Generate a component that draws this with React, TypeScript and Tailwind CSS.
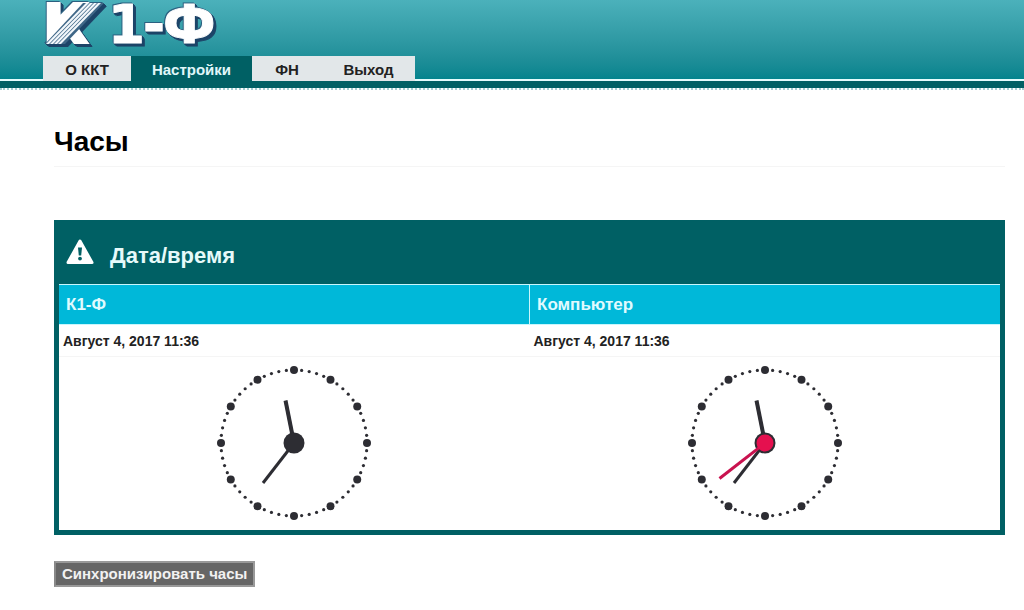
import clsx from 'clsx'
import React from 'react'

interface Tab {
  label: string
  width: string
  active?: boolean
}

interface ClockProps {
  label: string
  withSeconds?: boolean
}

const tabs: Tab[] = [
  { label: 'О ККТ', width: 'w-[88px]' },
  { label: 'Настройки', width: 'w-[121px]', active: true },
  { label: 'ФН', width: 'w-[70px]' },
  { label: 'Выход', width: 'w-[93px]' }
]

const clocks = [
  { name: 'К1-Ф', time: 'Август 4, 2017 11:36', withSeconds: false },
  { name: 'Компьютер', time: 'Август 4, 2017 11:36', withSeconds: true }
]

const ticks = Array.from({ length: 60 }, (_, i) => {
  const angle = (i * Math.PI) / 30
  return {
    x: 73 * Math.sin(angle),
    y: -73 * Math.cos(angle),
    r: i % 5 === 0 ? 4 : 1.6
  }
})

const stripes = [3, 7, 11, 15]

const Logo: React.FC = () => (
  <svg
    viewBox="0 0 180 56"
    className="block w-[180px] h-14 overflow-visible [filter:drop-shadow(-1px_-1px_0_#2b6080)_drop-shadow(1px_1px_0_#1d4468)_drop-shadow(1px_1px_0_#1d4468)_drop-shadow(1px_1px_0_#1d4468)]"
    fontFamily="DejaVu Sans"
    fontWeight="bold"
    role="img"
    aria-label="К1-Ф"
  >
    <g fill="#fff" stroke="#fff">
      <text x="1" y="42" fontSize="52" strokeWidth="4">
        К
      </text>
      <text x="65 100 120" y="43" fontSize="53" strokeWidth="1">
        1-Ф
      </text>
    </g>
    <polygon points="2,44 22,44 61,3 40,3" fill="#3f6787" />
    {stripes.map((x) => (
      <polygon
        key={x}
        points={`${x},44 ${x + 3},44 ${x + 43},3 ${x + 40},3`}
        fill="#f2f7fb"
      />
    ))}
  </svg>
)

const WarningIcon: React.FC = () => (
  <svg viewBox="0 0 28 26" className="block w-7 h-[26px]" aria-hidden="true">
    <path
      d="M14 2 L26 23.5 H2 Z"
      fill="#fff"
      stroke="#fff"
      strokeWidth="3"
      strokeLinejoin="round"
    />
    <path d="M12 8.5 h4 l-0.8 8 h-2.4 Z" fill="#006064" />
    <circle cx="14" cy="19.6" r="1.9" fill="#006064" />
  </svg>
)

const Clock: React.FC<ClockProps> = ({ label, withSeconds }) => (
  <svg
    viewBox="-78 -78 156 156"
    className="block mx-auto w-[156px] h-[156px]"
    role="img"
    aria-label={label}
  >
    {ticks.map((t, i) => (
      <circle key={i} cx={t.x} cy={t.y} r={t.r} fill="#2d2d33" />
    ))}
    <line x2="-8.5" y2="-42.5" stroke="#2d2d33" strokeWidth="4" />
    <line x2="-31" y2="40" stroke="#2d2d33" strokeWidth="3" />
    <circle r="10.5" fill="#2d2d33" />
    {withSeconds && (
      <>
        <line x2="-45.5" y2="35.5" stroke="#c9124f" strokeWidth="3" />
        <circle r="8.5" fill="#e5104f" />
      </>
    )}
  </svg>
)

const Header: React.FC = () => (
  <header>
    <div className="bg-linear-to-b from-[#4bb1bb] to-[#00828c]">
      <div className="h-14 pl-[43px]">
        <Logo />
      </div>
      <nav className="flex h-[25px]">
        <span className="w-[43px] border-b-2 border-[#e4fcfc]" />
        {tabs.map((tab) => (
          <a
            key={tab.label}
            href="#"
            className={clsx(
              'flex items-center justify-center pt-1 text-[15px] font-bold',
              tab.width,
              tab.active
                ? 'bg-[#006064] text-[#e0f7fa]'
                : 'bg-[#e2e7e9] text-[#222]'
            )}
          >
            {tab.label}
          </a>
        ))}
        <span className="flex-1 border-b-2 border-[#e4fcfc]" />
      </nav>
    </div>
    <div className="h-[7px] bg-[#006064]" />
    <div className="border-b-2 border-dotted border-[#a3cfd2]" />
  </header>
)

export default function App() {
  return (
    <div className="bg-white font-['Liberation_Sans',sans-serif] text-[#222]">
      <Header />
      <main className="pt-[34px] pl-[54px] pr-[19px]">
        <h1 className="pb-1.5 text-[28px] leading-9 font-bold text-black border-b border-[#f5f5f5]">
          Часы
        </h1>

        <section className="mt-[53px] border-[5px] border-t-0 border-[#006064]">
          <div className="flex items-center h-16 pl-[7px] bg-[#006064]">
            <WarningIcon />
            <h2 className="pt-2 pl-4 text-[22px] leading-8 font-bold text-[#e6fafa]">
              Дата/время
            </h2>
          </div>
          <table className="w-full table-fixed border-collapse text-left">
            <thead>
              <tr className="h-10 bg-[#00b8d9] border-y border-[#c8f6fc]">
                {clocks.map((c) => (
                  <th
                    key={c.name}
                    className="pl-[7px] text-[17px] font-bold text-[#e0fbff] border-r border-[#c8f6fc] last:border-r-0"
                  >
                    {c.name}
                  </th>
                ))}
              </tr>
            </thead>
            <tbody>
              <tr className="h-8 border-b border-[#f5f5f5]">
                {clocks.map((c) => (
                  <td key={c.name} className="pl-1 text-sm font-bold">
                    {c.time}
                  </td>
                ))}
              </tr>
              <tr>
                {clocks.map((c) => (
                  <td key={c.name} className="pt-2 pb-[9px]">
                    <Clock
                      label={`${c.name}: ${c.time}`}
                      withSeconds={c.withSeconds}
                    />
                  </td>
                ))}
              </tr>
            </tbody>
          </table>
        </section>

        <button
          type="button"
          className="mt-[26px] px-1.5 h-[26px] bg-[#666] border-2 border-[#999] border-l-[#888] text-[15px] leading-5 font-bold text-[#f2f2f2]"
        >
          Синхронизировать часы
        </button>
      </main>
    </div>
  )
}
